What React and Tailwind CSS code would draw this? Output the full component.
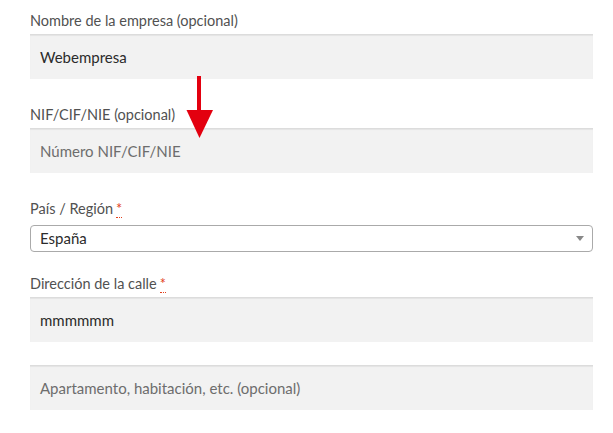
const font = { fontFamily: 'Lato, "Open Sans", sans-serif' }

function Required() {
  return (
    <abbr
      title="obligatorio"
      className="ml-[3px] text-[#e2401c] no-underline border-b border-dotted border-[#e2401c] leading-none"
    >
      *
    </abbr>
  )
}

function Field({ label, required, value, placeholder, className = '' }) {
  return (
    <div className={className}>
      {label && (
        <label className="block text-[14.5px] leading-6 text-[#515151] mb-[1px]">
          {label}
          {required && <Required />}
        </label>
      )}
      <div className="h-[45px] bg-[#f2f2f2] border-t border-[#dcdcdc] shadow-[inset_0_1px_1px_rgba(0,0,0,0.06)] flex items-center px-[10px] text-[15px]">
        {value ? (
          <span className="text-[#2b2b2b]">{value}</span>
        ) : (
          <span className="text-[#6d6d6d]">{placeholder}</span>
        )}
      </div>
    </div>
  )
}

function Arrow() {
  return (
    <svg className="absolute left-[185px] top-[76px]" width="30" height="64" viewBox="0 0 30 64">
      <rect x="12" y="0" width="4" height="36" fill="#e3000f" />
      <polygon points="1.5,34 28,34 14.5,62" fill="#e3000f" />
    </svg>
  )
}

export default function App() {
  return (
    <div className="relative w-[613px] h-[433px] bg-white overflow-hidden" style={font}>
      <div className="pl-[30px] pr-[20px] pt-[9px]">
        <Field label="Nombre de la empresa (opcional)" value="Webempresa" />
        <Field label="NIF/CIF/NIE (opcional)" placeholder="Número NIF/CIF/NIE" className="mt-[24px]" />

        <div className="mt-[24px]">
          <label className="block text-[14.5px] leading-6 text-[#515151] mb-[4px]">
            País / Región
            <Required />
          </label>
          <div className="h-[27px] bg-white border border-[#aaaaaa] rounded-[4px] flex items-center justify-between pl-[9px] pr-[8px] text-[15px] text-[#2b2b2b]">
            <span>España</span>
            <span className="w-0 h-0 border-l-[4px] border-r-[4px] border-t-[5px] border-l-transparent border-r-transparent border-t-[#888888]" />
          </div>
        </div>

        <Field label="Dirección de la calle" required value="mmmmmm" className="mt-[20px]" />
        <Field placeholder="Apartamento, habitación, etc. (opcional)" className="mt-[23px]" />
      </div>
      <Arrow />
    </div>
  )
}
